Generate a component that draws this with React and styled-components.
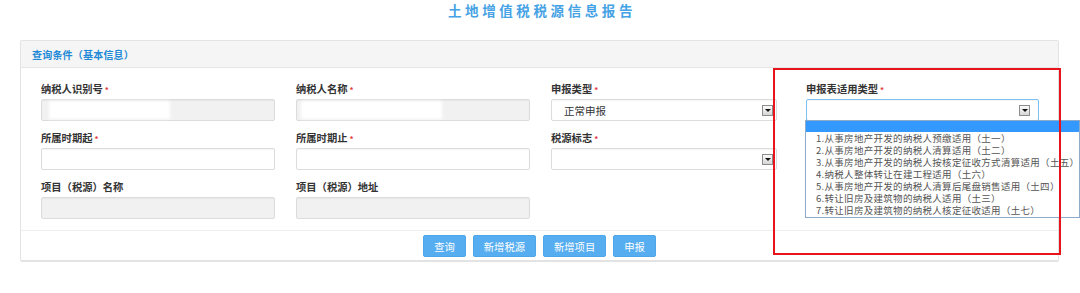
import React from 'react';
import styled, { createGlobalStyle } from 'styled-components';

const GlobalStyle = createGlobalStyle`
  *, *::before, *::after { box-sizing: border-box; }
  html, body { margin: 0; padding: 0; background: #fff; }
  body {
    font-family: "Liberation Sans", "Noto Sans CJK SC", sans-serif;
    color: #333;
  }
`;

const Page = styled.div`
  position: relative;
  width: 1080px;
  height: 293px;
  overflow: hidden;
  background: #fff;
`;

const Title = styled.h1`
  margin: 0;
  height: 40px;
  padding-left: 4px;
  line-height: 20px;
  text-align: center;
  font-family: "Noto Sans CJK SC", sans-serif;
  font-size: 13.5px;
  font-weight: bold;
  letter-spacing: 3.6px;
  color: #45a2e4;
`;

const Panel = styled.section`
  margin-left: 20px;
  width: 1039px;
  border: 1px solid #e3e3e3;
  border-bottom-width: 2px;
  border-radius: 2px;
  background: #fff;
`;

const PanelHeader = styled.div`
  height: 27px;
  padding-left: 11px;
  display: flex;
  align-items: center;
  background: #f5f5f5;
  border-bottom: 1px solid #e6e6e6;
  font-family: "Noto Sans CJK SC", sans-serif;
  font-size: 10px;
  font-weight: bold;
  letter-spacing: 0.2px;
  color: #2189d6;
`;

const FormGrid = styled.div`
  display: grid;
  grid-template-columns: repeat(4, 234px);
  column-gap: 21px;
  row-gap: 10px;
  padding: 14px 0 11px 20px;
`;

const Field = styled.div`
  position: relative;
  display: flex;
  flex-direction: column;
`;

const Label = styled.div`
  height: 14px;
  margin-bottom: 3px;
  line-height: 14px;
  font-family: "Noto Sans CJK SC", sans-serif;
  font-size: 10.3px;
  font-weight: bold;
  color: #333;
`;

const Star = styled.span`
  margin-left: 2px;
  font-size: 8px;
  color: #e5343b;
`;

const Box = styled.div`
  position: relative;
  width: ${p => p.$width || 234}px;
  height: 22px;
  display: flex;
  align-items: center;
  padding-left: ${p => p.$indent || 6}px;
  border: 1px solid ${p => (p.$focus ? '#7dbfee' : '#dcdcdc')};
  border-radius: 2px;
  background: ${p => (p.$disabled ? '#f1f1f1' : '#fff')};
  box-shadow: inset 0 1px 1px rgba(0, 0, 0, 0.04);
  font-family: "Noto Sans CJK SC", sans-serif;
  font-size: 10.5px;
  color: #333;
`;

const Smudge = styled.span`
  display: inline-block;
  width: ${p => p.$width}px;
  height: 18px;
  background: #fff;
  filter: blur(1.6px);
`;

const Arrow = styled.span`
  position: absolute;
  top: 5px;
  right: ${p => p.$right}px;
  width: 11px;
  height: 11px;
  display: flex;
  align-items: center;
  justify-content: center;
  border: 1px solid #8c8c8c;
  background: linear-gradient(#fbfbfb, #d6d6d6);

  &::after {
    content: "";
    border-left: 3px solid transparent;
    border-right: 3px solid transparent;
    border-top: 3px solid #111;
  }
`;

const DropList = styled.ul`
  position: absolute;
  left: -1px;
  top: calc(100% - 1px);
  z-index: 2;
  width: 275px;
  margin: 0;
  padding: 0 0 1px;
  list-style: none;
  border: 1px solid #8fa9c8;
  background: #fff;
`;

const Option = styled.li`
  height: ${p => (p.$active ? 11 : 12)}px;
  padding-left: 10px;
  line-height: 12px;
  white-space: nowrap;
  font-family: "Noto Sans CJK SC", sans-serif;
  font-size: 9.5px;
  letter-spacing: 0.3px;
  color: #555;
  background: ${p => (p.$active ? '#3399ff' : 'transparent')};
`;

const Footer = styled.div`
  display: flex;
  justify-content: center;
  gap: 7px;
  padding: 4px 0 3px;
  border-top: 1px solid #efefef;
`;

const Button = styled.button`
  height: 22px;
  padding: 0 10px;
  border: 1px solid #4ea6ea;
  border-radius: 2px;
  background: #56adf0;
  color: #fff;
  font-family: "Noto Sans CJK SC", sans-serif;
  font-size: 10.3px;
  cursor: pointer;
`;

const Annotation = styled.div`
  position: absolute;
  left: 773px;
  top: 68px;
  width: 288px;
  height: 187px;
  z-index: 3;
  border: 2px solid #e8141c;
  pointer-events: none;
`;

const options = [
  '1.从事房地产开发的纳税人预缴适用（土一）',
  '2.从事房地产开发的纳税人清算适用（土二）',
  '3.从事房地产开发的纳税人按核定征收方式清算适用（土五）',
  '4.纳税人整体转让在建工程适用（土六）',
  '5.从事房地产开发的纳税人清算后尾盘销售适用（土四）',
  '6.转让旧房及建筑物的纳税人适用（土三）',
  '7.转让旧房及建筑物的纳税人核定征收适用（土七）',
];

const FieldLabel = ({ text, required }) => (
  <Label>
    {text}
    {required && <Star>*</Star>}
  </Label>
);

export default function App() {
  return (
    <Page>
      <GlobalStyle />
      <Title>土地增值税税源信息报告</Title>
      <Panel>
        <PanelHeader>查询条件（基本信息）</PanelHeader>
        <FormGrid>
          <Field>
            <FieldLabel text="纳税人识别号" required />
            <Box $disabled $indent={7}>
              <Smudge $width={121} />
            </Box>
          </Field>
          <Field>
            <FieldLabel text="纳税人名称" required />
            <Box $disabled $indent={4}>
              <Smudge $width={141} />
            </Box>
          </Field>
          <Field>
            <FieldLabel text="申报类型" required />
            <Box $width={226} $indent={12}>
              正常申报
              <Arrow $right={3} />
            </Box>
          </Field>
          <Field>
            <FieldLabel text="申报表适用类型" required />
            <Box $width={233} $focus>
              <Arrow $right={8} />
            </Box>
            <DropList>
              <Option $active />
              {options.map(o => (
                <Option key={o}>{o}</Option>
              ))}
            </DropList>
          </Field>

          <Field>
            <FieldLabel text="所属时期起" required />
            <Box />
          </Field>
          <Field>
            <FieldLabel text="所属时期止" required />
            <Box />
          </Field>
          <Field>
            <FieldLabel text="税源标志" required />
            <Box $width={226}>
              <Arrow $right={3} />
            </Box>
          </Field>
          <Field />

          <Field>
            <FieldLabel text="项目（税源）名称" />
            <Box $disabled />
          </Field>
          <Field>
            <FieldLabel text="项目（税源）地址" />
            <Box $disabled />
          </Field>
        </FormGrid>
        <Footer>
          <Button>查询</Button>
          <Button>新增税源</Button>
          <Button>新增项目</Button>
          <Button>申报</Button>
        </Footer>
      </Panel>
      <Annotation />
    </Page>
  );
}
